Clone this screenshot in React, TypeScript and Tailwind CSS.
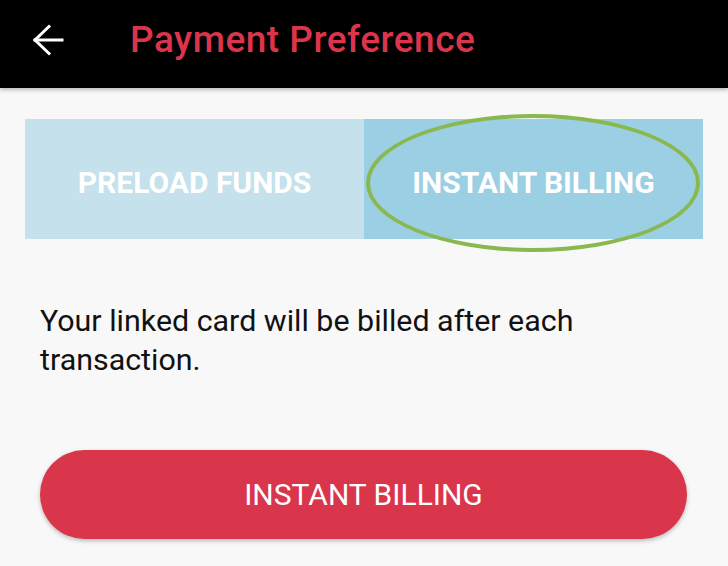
export default function App() {
    return (
        <div className="w-[728px] h-[566px] bg-[#f8f8f8] overflow-hidden" style={{ fontFamily: 'Roboto, sans-serif' }}>
            {/* Toolbar */}
            <div className="h-[88px] bg-black flex items-center pb-[8px] shadow-[0_2px_4px_rgba(0,0,0,0.25)] relative z-10">
                <svg className="ml-[32px] w-[32px] h-[32px]" viewBox="0 0 32 32" fill="none" stroke="white" strokeWidth={3} strokeLinecap="square">
                    <path d="M3 16H30" />
                    <path d="M17 2.5L3 16L17 29.5" />
                </svg>
                <h1 className="ml-[66px] text-[37px] font-medium text-[#dc344b] tracking-[0.5px]">Payment Preference</h1>
            </div>

            {/* Tabs */}
            <div className="mt-[31px] mx-[25px] h-[120px] flex relative">
                <div className="flex-1 bg-[#c4e1ec] flex items-center justify-center pt-[7px]">
                    <span className="text-white font-bold text-[30px]">PRELOAD FUNDS</span>
                </div>
                <div className="flex-1 bg-[#9bcfe4] flex items-center justify-center pt-[7px]">
                    <span className="text-white font-bold text-[30px]">INSTANT BILLING</span>
                </div>
                <div className="absolute left-[341px] top-[-5px] w-[334px] h-[138px] rounded-[50%] border-[4px] border-[#8ab84f] pointer-events-none" />
            </div>

            {/* Description */}
            <p className="mt-[62px] mx-[40px] text-[30.4px] leading-[39px] text-[#111]">
                Your linked card will be billed after each transaction.
            </p>

            {/* Action button */}
            <div className="mt-[71px] mx-[40px]">
                <button className="w-[647px] h-[89px] rounded-full bg-[#d9354b] text-white text-[30px] shadow-[0_2px_4px_rgba(0,0,0,0.25)]">
                    INSTANT BILLING
                </button>
            </div>
        </div>
    )
}
